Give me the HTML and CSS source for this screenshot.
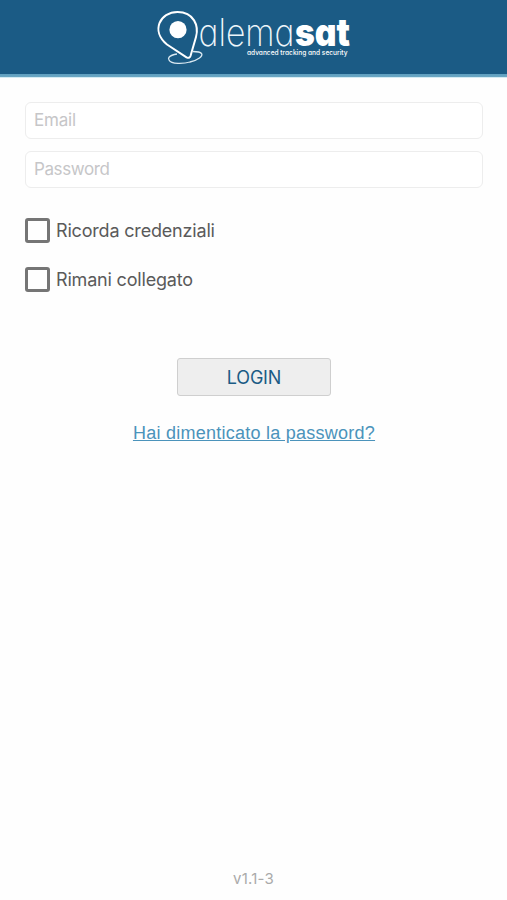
FILE: index.html
```html
<!DOCTYPE html>
<html lang="it">
<head>
<meta charset="utf-8">
<meta name="viewport" content="width=device-width, initial-scale=1">
<title>Alemasat</title>
<link rel="stylesheet" href="styles.css">
</head>
<body>
<header class="header">
  <svg class="logo" viewBox="150 0 210 74" role="img" aria-label="alemasat">
    <path class="orbit" d="M177 54C168 55.500 168 58.500 169 60C171 64.500 184 63.800 190 62C198 60 203.500 56 201.500 53.500C200.300 52 197.500 51.500 193 51.500"/>
    <path class="pin" d="M186.500 57.300L167 44.500C150.500 31 160 12 177.500 12C194 12 199 26 196 37L190.500 56Q189.500 58.800 186.500 57.300Z"/>
    <circle class="dot" cx="178" cy="29.700" r="8.600"/>
    <text class="brand-thin" x="198.500" y="45.500" textLength="96" lengthAdjust="spacingAndGlyphs">alema</text>
    <text class="brand-bold" x="295" y="45.500" textLength="55" lengthAdjust="spacingAndGlyphs">sat</text>
    <text class="tagline" x="247" y="55" textLength="100.500" lengthAdjust="spacingAndGlyphs">advanced tracking and security</text>
  </svg>
</header>
<main class="main">
  <form class="form">
    <input class="field" type="text" placeholder="Email" aria-label="Email">
    <input class="field password" type="password" placeholder="Password" aria-label="Password">
    <label class="check"><input class="box" type="checkbox"><span>Ricorda credenziali</span></label>
    <label class="check"><input class="box" type="checkbox"><span>Rimani collegato</span></label>
    <button class="login" type="button">LOGIN</button>
    <a class="forgot" href="#">Hai dimenticato la password?</a>
  </form>
</main>
<footer class="version">v1.1-3</footer>
</body>
</html>
```
FILE: styles.css
```css
* { box-sizing: border-box; }
body {
  margin: 0;
  height: 900px;
  display: flex;
  flex-direction: column;
  background: #fefefe;
  font-family: Inter, "Liberation Sans", sans-serif;
  color: #5a5a5a;
}
.header {
  height: 78px;
  display: flex;
  justify-content: center;
  align-items: flex-start;
  background: linear-gradient(#1b5b85 74px, #5f9fc0 74px, #6ba7c3 77px, #d5ebf3 77px);
}
.logo { width: 210px; height: 74px; margin-left: 3px; overflow: visible; }
.pin { fill: #1b5b85; stroke: #fff; stroke-width: 2; stroke-linejoin: round; }
.orbit { fill: none; stroke: #d9e8f1; stroke-width: 1.3; }
.dot { fill: #fff; }
.brand-thin, .brand-bold, .tagline {
  font-family: Inter, Lato, sans-serif;
  font-feature-settings: "cv11" 1;
}
.brand-thin { font-size: 38px; font-weight: 200; fill: #eef6fa; }
.brand-bold { font-size: 38px; font-weight: 900; fill: #fff; }
.tagline { font-size: 7px; font-weight: 500; fill: #fff; }
.main { flex: 1; padding: 24px 24px 0 25px; }
.form { display: flex; flex-direction: column; }
.field {
  width: 100%;
  height: 37px;
  margin-bottom: 12px;
  padding: 0 8px 1px;
  border: 1px solid #ededed;
  border-radius: 6px;
  background: #fff;
  font: 17px Inter, sans-serif;
  letter-spacing: -0.2px;
}
.password { letter-spacing: -0.4px; }
.field::placeholder { color: #c6c6c8; opacity: 1; }
.check {
  display: flex;
  align-items: center;
  height: 25px;
  margin: 18px 0 6px;
  gap: 6px;
  font-size: 18px;
  line-height: 25px;
  letter-spacing: -0.18px;
}
.check + .check { margin-bottom: 66px; }
.box {
  appearance: none;
  width: 25px;
  height: 25px;
  margin: 0;
  border: 3px solid #757575;
  border-radius: 3px;
}
.login {
  align-self: center;
  width: 154px;
  height: 38px;
  padding: 0;
  border: 1px solid #cfcfcf;
  border-radius: 3px;
  background: #eee;
  color: #1b5b85;
  font: 18px Inter, sans-serif;
  letter-spacing: -0.2px;
}
.forgot {
  align-self: center;
  margin-top: 26px;
  color: #4b93bb;
  font: 18px/22px "Liberation Sans", sans-serif;
  letter-spacing: 0.25px;
}
.version {
  height: 42px;
  padding-top: 12px;
  text-align: center;
  color: #aaa;
  font-size: 15px;
  line-height: 18px;
  letter-spacing: 0.2px;
}
```
